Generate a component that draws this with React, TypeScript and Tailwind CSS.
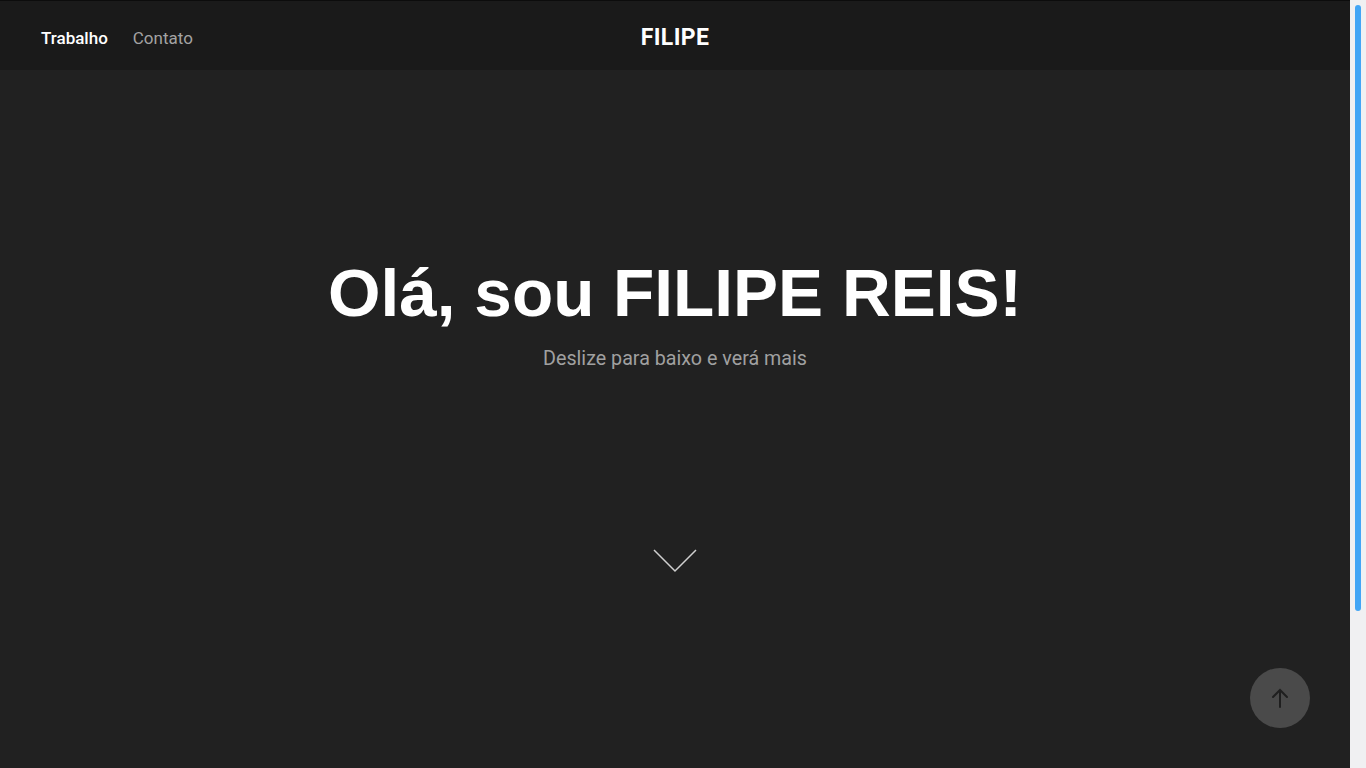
const ChevronDown = () => (
  <svg width="44" height="24" viewBox="0 0 44 24" fill="none">
    <path d="M1 1 L22 22 L43 1" stroke="#d0d0d0" strokeWidth="1.5" />
  </svg>
);

const ArrowUp = () => (
  <svg width="24" height="24" viewBox="0 0 24 24" fill="none">
    <path
      d="M12 21 V4 M5 11 L12 4 L19 11"
      stroke="#1f1f1f"
      strokeWidth="2"
      strokeLinecap="round"
    />
  </svg>
);

const Header = () => (
  <header className="grid h-[70px] grid-cols-3 items-center border-t border-[#0c0c0c] bg-[#1a1a1a] px-[41px] pt-[6px] font-['Roboto',sans-serif]">
    <nav className="flex items-center gap-[25px] text-[17px]">
      <a className="cursor-pointer font-medium text-white">Trabalho</a>
      <a className="cursor-pointer text-[#a3a3a3]">Contato</a>
    </nav>
    <div className="text-center text-[23px] font-bold tracking-[0.4px] text-white">
      FILIPE
    </div>
    <div />
  </header>
);

// fake scrollbar, the real one is hidden in the screenshot browser
const Scrollbar = () => (
  <div className="w-4 shrink-0 bg-[#f0f0f2] px-[5px] pt-[5px]">
    <div className="h-[606px] rounded-full bg-[#42a5f5]" />
  </div>
);

const App = () => {
  return (
    <div className="relative flex h-screen w-full overflow-hidden bg-[#212121]">
      <div className="flex-1">
        <Header />
        <section className="flex flex-col items-center pt-[189px]">
          <h1 className="font-['Liberation_Sans',Arial,sans-serif] text-[67.5px] leading-none font-bold text-white">
            Olá, sou FILIPE REIS!
          </h1>
          <p className="mt-[17px] font-['Roboto',sans-serif] text-[19.7px] text-[#a0a0a0]">
            Deslize para baixo e verá mais
          </p>
          <div className="mt-[176px]">
            <ChevronDown />
          </div>
        </section>
      </div>
      <Scrollbar />
      <button className="absolute right-[56px] bottom-[40px] flex h-[60px] w-[60px] items-center justify-center rounded-full bg-[#4a4a4a]">
        <ArrowUp />
      </button>
    </div>
  );
};

export default App;
